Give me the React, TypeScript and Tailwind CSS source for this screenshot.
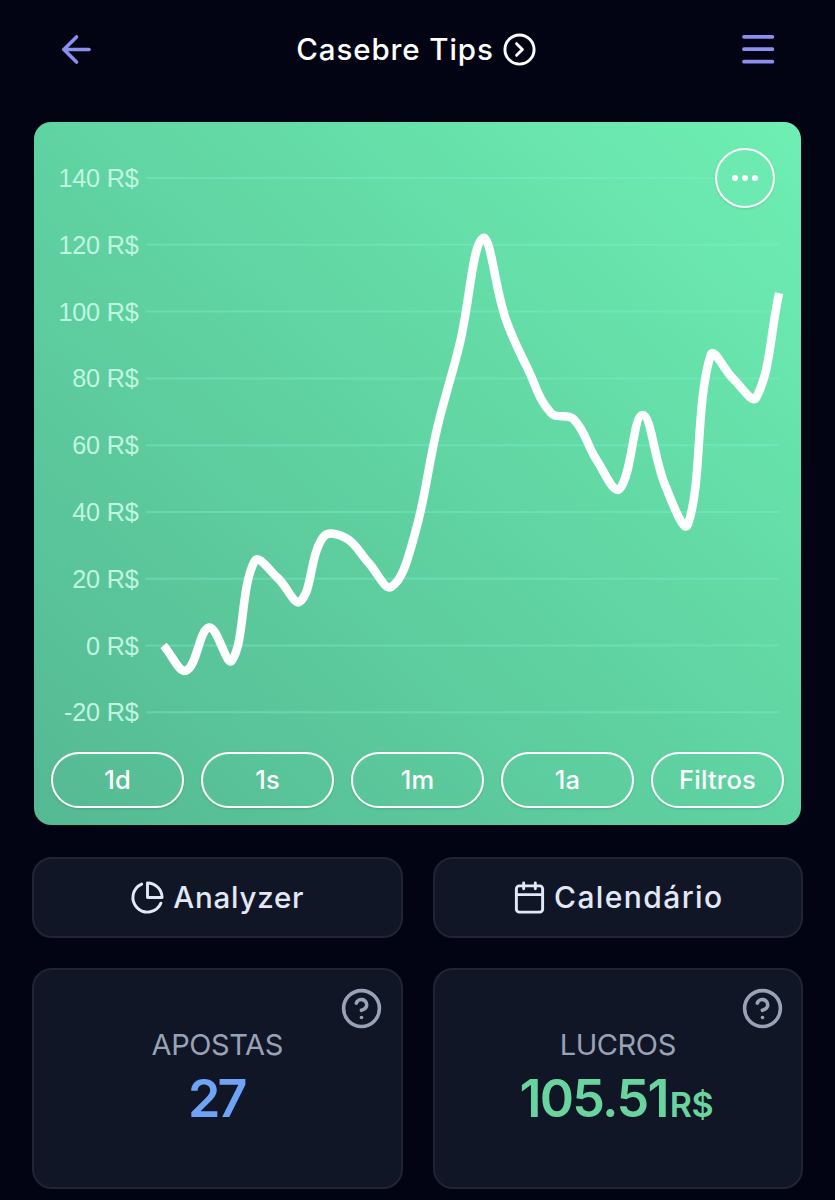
import type { ReactNode } from 'react'
import { ArrowLeft, CircleChevronRight, CircleQuestionMark } from 'lucide-react'

const ticks = [140, 120, 100, 80, 60, 40, 20, 0, -20]

const balance = [
  0, -7.5, 5.4, -4.5, 25.3, 20.3, 13.2, 32.4, 32.2, 24.7, 17.6, 32.8, 65, 90.6, 122, 98,
  82.5, 69.6, 67.7, 55.5, 46.9, 69, 48, 36.3, 87, 79.8, 74.3, 105.51,
]

const ranges = ['1d', '1s', '1m', '1a', 'Filtros']

const toY = (value: number) => 523.5 - value * 3.339

// smooth line, control points weighted by the distance to the neighbours
function buildPath(values: number[]) {
  const tension = 0.4
  const pts = values.map((v, i) => ({ x: 129.5 + i * 22.8, y: toY(v) }))
  const controls = pts.map((p, i) => {
    const prev = pts[i - 1] || p
    const next = pts[i + 1] || p
    const d1 = Math.hypot(p.x - prev.x, p.y - prev.y)
    const d2 = Math.hypot(next.x - p.x, next.y - p.y)
    const a = (tension * d1) / (d1 + d2)
    const b = (tension * d2) / (d1 + d2)
    const dx = next.x - prev.x
    const dy = next.y - prev.y
    return { inX: p.x - a * dx, inY: p.y - a * dy, outX: p.x + b * dx, outY: p.y + b * dy }
  })

  return pts
    .map((p, i) => {
      if (i === 0) return `M${p.x} ${p.y}`
      const from = controls[i - 1]
      const to = controls[i]
      return `C${from.outX} ${from.outY} ${to.inX} ${to.inY} ${p.x} ${p.y}`
    })
    .join('')
}

function BalanceChart() {
  return (
    <svg width="767" height="630" viewBox="0 0 767 630" className="block shrink-0">
      {ticks.map((t) => (
        <g key={t}>
          <line x1="112" x2="745" y1={toY(t)} y2={toY(t)} stroke="#7ff0cf" strokeOpacity="0.38" strokeWidth="2" />
          <text
            x="104.5"
            y={toY(t) + 9}
            textAnchor="end"
            fontSize="25.2"
            letterSpacing="-0.2"
            fill="#c0f5e0"
            fontFamily="'Liberation Sans', Arial, sans-serif"
          >
            {t} R$
          </text>
        </g>
      ))}
      <path d={buildPath(balance)} fill="none" stroke="#fff" strokeWidth="8.5" strokeLinejoin="round" />
    </svg>
  )
}

function PieIcon() {
  return (
    <svg width="35" height="35" viewBox="0 0 24 24" fill="none" stroke="currentColor" strokeWidth="2" strokeLinecap="round" strokeLinejoin="round">
      <path d="M21.21 15.89A10 10 0 1 1 8 2.83" />
      <path d="M22 12A10 10 0 0 0 12 2v10z" />
    </svg>
  )
}

function CalendarIcon() {
  return (
    <svg width="35" height="35" viewBox="0 0 24 24" fill="none" stroke="currentColor" strokeWidth="2" strokeLinecap="round" strokeLinejoin="round">
      <rect x="3" y="4" width="18" height="18" rx="2" />
      <path d="M16 2v4M8 2v4M3 10h18" />
    </svg>
  )
}

function StatCard({ label, children }: { label: string; children: ReactNode }) {
  return (
    <div className="relative flex h-[221px] flex-col items-center rounded-[20px] border-2 border-[#1f2533] bg-[#111627] pt-[53px]">
      <CircleQuestionMark size={43} strokeWidth={2} className="absolute top-[17px] right-[17.5px] text-[#9aa2b6]" />
      <span className="text-[29px] leading-[44px] tracking-[-0.4px] text-[#9aa2b6]">{label}</span>
      {children}
    </div>
  )
}

export default function App() {
  return (
    <div className="min-h-[1200px] bg-[#020413] font-['Inter',sans-serif]">
      <header className="flex h-[98px] items-center justify-between pr-[59px] pl-[55px]">
        <button className="text-[#8b8ff0]">
          <ArrowLeft size={43} strokeWidth={2} />
        </button>
        <button className="mr-[5px] flex items-center gap-[8px] text-white">
          <span className="pt-[2px] text-[29.5px] leading-none font-medium tracking-[0.9px]">Casebre Tips</span>
          <CircleChevronRight size={35} strokeWidth={2} />
        </button>
        <button className="text-[#8b8ff0]">
          <svg width="36" height="36" viewBox="0 0 36 36" stroke="currentColor" strokeWidth="3.7" strokeLinecap="round">
            <path d="M4 5.8h28.4M4 18.2h28.4M4 30.7h28.4" />
          </svg>
        </button>
      </header>

      <main className="px-8">
        <section className="relative mx-[2px] mt-6 flex h-[703px] w-[767px] flex-col rounded-[17px] bg-linear-to-tr from-[#55b993] via-[#60d3a2] to-[#6eefb3]">
          <BalanceChart />
          <div className="flex gap-[17px] px-[17px]">
            {ranges.map((r) => (
              <button
                key={r}
                className="flex h-14 w-[133px] items-center justify-center rounded-full border-2 border-white text-[25.5px] font-medium tracking-[0.2px] text-white shadow-sm"
              >
                {r}
              </button>
            ))}
          </div>
          <button className="absolute top-[26px] right-[26px] flex size-[60px] items-center justify-center gap-1 rounded-full border-2 border-white bg-[#6ceab1] shadow-sm">
            <span className="size-1.5 rounded-full bg-white" />
            <span className="size-1.5 rounded-full bg-white" />
            <span className="size-1.5 rounded-full bg-white" />
          </button>
        </section>

        <div className="mt-8 grid grid-cols-2 gap-[30px]">
          <button className="flex h-[81px] items-center justify-center gap-2 rounded-[20px] border-2 border-[#1f2533] bg-[#111627] text-[29.5px] font-medium tracking-[0.8px] text-[#e2e8f5]">
            <PieIcon />
            Analyzer
          </button>
          <button className="flex h-[81px] items-center justify-center gap-[7px] rounded-[20px] border-2 border-[#1f2533] bg-[#111627] text-[30px] font-medium tracking-[1.4px] text-[#e2e8f5]">
            <CalendarIcon />
            Calendário
          </button>
        </div>

        <div className="mt-[30px] grid grid-cols-2 gap-[30px]">
          <StatCard label="APOSTAS">
            <span className="mr-[2px] text-[52px] leading-[64px] font-semibold tracking-[-3px] text-[#6ea3f5]">27</span>
          </StatCard>
          <StatCard label="LUCROS">
            <span className="mr-[3px] text-[52px] leading-[64px] font-semibold tracking-[-1.7px] text-[#69d49e]">
              105.51<span className="ml-[2px] text-[34px] tracking-[-0.5px]">R$</span>
            </span>
          </StatCard>
        </div>
      </main>
    </div>
  )
}
